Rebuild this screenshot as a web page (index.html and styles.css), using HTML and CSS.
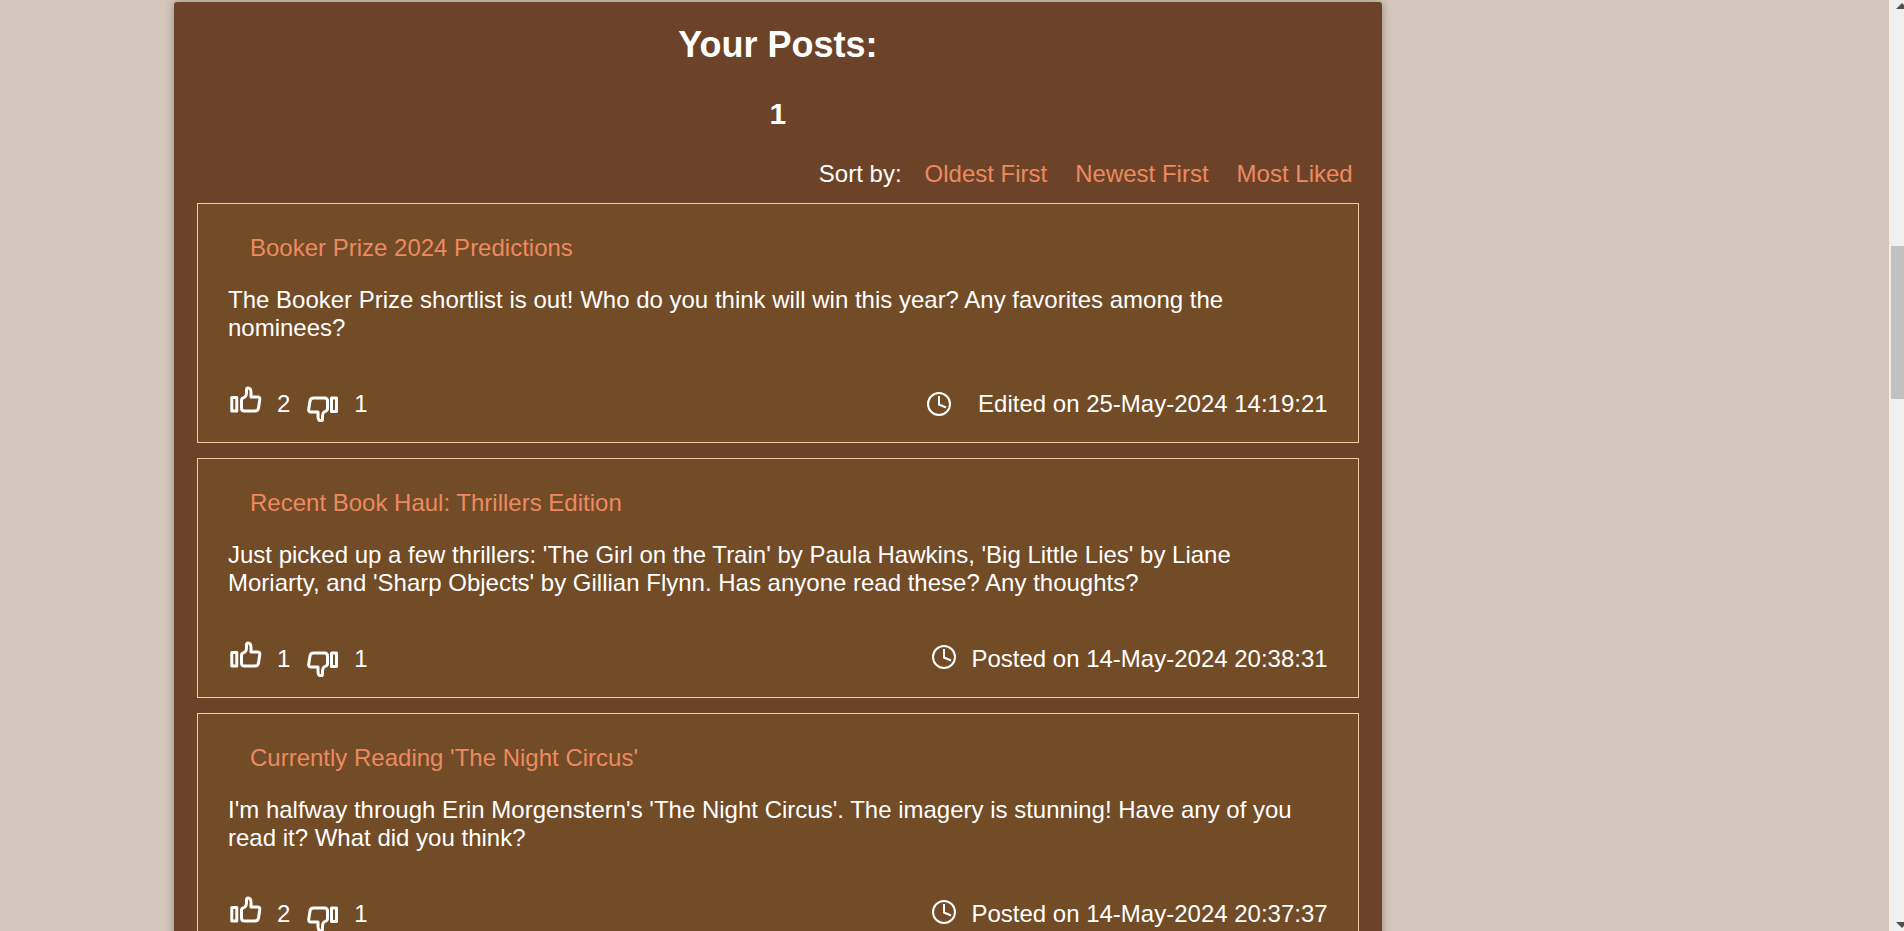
FILE: index.html
```html
<!DOCTYPE html>
<html lang="en">
<head>
<meta charset="utf-8">
<title>Your Posts</title>
<link rel="stylesheet" href="styles.css">
</head>
<body>
<svg class="sprite" aria-hidden="true">
  <symbol id="thumb-up" viewBox="0 0 36 36">
    <path d="M3.800 11.500h5v13.500h-5zM13.500 14q0-1.500 1.500-2l2-1q1.500-1.500 1.500-4V4q0-2 1.500-2 3 0 3 4.500V11h6.500q2.500 0 2.300 2.500l-1.300 8.500q-.5 3-3.500 3H16.500q-3 0-3-3z"/>
  </symbol>
  <symbol id="thumb-down" viewBox="0 0 36 36">
    <path d="M26.500 12h5v13.500h-5zM22.500 23q0 1.500-1.500 2l-2 1q-1.500 1.500-1.500 4v3q0 1.800-1.500 1.800-3 0-3-4.500V26H6q-2.500 0-2.300-2.500L5 15q.5-3 3.500-3h11q3 0 3 3z"/>
  </symbol>
  <symbol id="clock" viewBox="0 0 26 26">
    <circle cx="13" cy="13" r="11"/>
    <path d="M13 5v8.500l7 3"/>
  </symbol>
</svg>
<div class="page">
  <main class="panel">
    <h1 class="panel-title">Your Posts:</h1>
    <h2 class="page-number">1</h2>
    <nav class="sort">
      <span>Sort by:</span>
      <a class="link" href="#">Oldest First</a>
      <a class="link" href="#">Newest First</a>
      <a class="link" href="#">Most Liked</a>
    </nav>
    <div class="posts">
      <article class="post">
        <h3 class="post-title"><a class="link" href="#">Booker Prize 2024 Predictions</a></h3>
        <p class="post-text">The Booker Prize shortlist is out! Who do you think will win this year? Any favorites among the nominees?</p>
        <footer class="post-footer">
          <div class="votes">
            <button class="vote" type="button" aria-label="Like"><svg class="vote-icon"><use href="#thumb-up"/></svg>2</button>
            <button class="vote" type="button" aria-label="Dislike"><svg class="vote-icon"><use href="#thumb-down"/></svg>1</button>
          </div>
          <div class="stamp stamp-edited"><svg class="clock-icon"><use href="#clock"/></svg><span>Edited on 25-May-2024 14:19:21</span></div>
        </footer>
      </article>
      <article class="post">
        <h3 class="post-title"><a class="link" href="#">Recent Book Haul: Thrillers Edition</a></h3>
        <p class="post-text">Just picked up a few thrillers: 'The Girl on the Train' by Paula Hawkins, 'Big Little Lies' by Liane Moriarty, and 'Sharp Objects' by Gillian Flynn. Has anyone read these? Any thoughts?</p>
        <footer class="post-footer">
          <div class="votes">
            <button class="vote" type="button" aria-label="Like"><svg class="vote-icon"><use href="#thumb-up"/></svg>1</button>
            <button class="vote" type="button" aria-label="Dislike"><svg class="vote-icon"><use href="#thumb-down"/></svg>1</button>
          </div>
          <div class="stamp"><svg class="clock-icon"><use href="#clock"/></svg><span>Posted on 14-May-2024 20:38:31</span></div>
        </footer>
      </article>
      <article class="post">
        <h3 class="post-title"><a class="link" href="#">Currently Reading 'The Night Circus'</a></h3>
        <p class="post-text">I'm halfway through Erin Morgenstern's 'The Night Circus'. The imagery is stunning! Have any of you read it? What did you think?</p>
        <footer class="post-footer">
          <div class="votes">
            <button class="vote" type="button" aria-label="Like"><svg class="vote-icon"><use href="#thumb-up"/></svg>2</button>
            <button class="vote" type="button" aria-label="Dislike"><svg class="vote-icon"><use href="#thumb-down"/></svg>1</button>
          </div>
          <div class="stamp"><svg class="clock-icon"><use href="#clock"/></svg><span>Posted on 14-May-2024 20:37:37</span></div>
        </footer>
      </article>
    </div>
  </main>
</div>
<div class="scrollbar" aria-hidden="true">
  <svg class="arrow" viewBox="0 0 8 8"><path d="M0 7 6 1l6 6z"/></svg>
  <div class="track"><div class="thumb"></div></div>
  <svg class="arrow" viewBox="0 0 8 8"><path d="M0 1l6 6 6-6z"/></svg>
</div>
</body>
</html>
```
FILE: styles.css
```css
* {
  box-sizing: border-box;
}

body {
  margin: 0;
  height: 100vh;
  display: flex;
  overflow: hidden;
  background: #d4c6ba;
  color: #fff;
  font: 24px/28px Arial, "Liberation Sans", sans-serif;
}

.sprite {
  position: absolute;
  width: 0;
  height: 0;
}

.page {
  flex: 1;
  padding: 2px 0 0 174px;
  overflow: hidden;
}

.panel {
  width: calc((100% + 172px) * 0.64);
  padding: 22px 23px;
  border-radius: 3px;
  background: #6c4328;
  box-shadow: 0 0 10px rgba(0, 0, 0, 0.3);
}

.panel-title {
  margin: 0 0 31px;
  font-size: 36px;
  line-height: 42px;
  text-align: center;
}

.page-number {
  margin: 0 0 29px;
  font-size: 30px;
  line-height: 34px;
  text-align: center;
}

.sort {
  display: flex;
  justify-content: flex-end;
  gap: 28px;
  padding-right: 6px;
  margin-bottom: 15px;
}

.sort span {
  margin-right: -5px;
}

.link {
  color: #ec8a60;
  text-decoration: none;
}

.posts {
  display: grid;
  gap: 15px;
}

.post {
  padding: 30px 30px 20px;
  border: 1px solid #f7c8a8;
  background: #724b27;
}

.post-title {
  margin: 0 0 24px;
  padding-left: 22px;
  font-size: 24px;
  font-weight: normal;
}

.post-text {
  margin: 0 0 44px;
}

.post-footer,
.votes,
.vote,
.stamp {
  display: flex;
  align-items: center;
}

.post-footer {
  justify-content: space-between;
}

.votes {
  gap: 15px;
}

.vote {
  gap: 13px;
  padding: 0;
  border: 0;
  background: none;
  color: inherit;
  font: inherit;
}

.vote-icon {
  width: 36px;
  height: 36px;
  fill: none;
  stroke: #fff;
  stroke-width: 3;
  stroke-linejoin: round;
}

.stamp {
  gap: 14px;
}

.clock-icon {
  width: 26px;
  height: 26px;
  margin-bottom: 4px;
  fill: none;
  stroke: #fff;
  stroke-width: 2;
}

.stamp-edited {
  gap: 26px;
}

.stamp-edited .clock-icon {
  margin-bottom: 0;
}

.scrollbar {
  width: 15px;
  display: flex;
  flex-direction: column;
  align-items: flex-end;
  background: #f0f0f0;
}

.arrow {
  width: 8px;
  height: 8px;
  margin: 2px 0;
  fill: #505050;
}

.track {
  flex: 1;
  width: 13px;
  padding-top: 234px;
}

.thumb {
  height: 153px;
  background: #c1c1c1;
}
```
